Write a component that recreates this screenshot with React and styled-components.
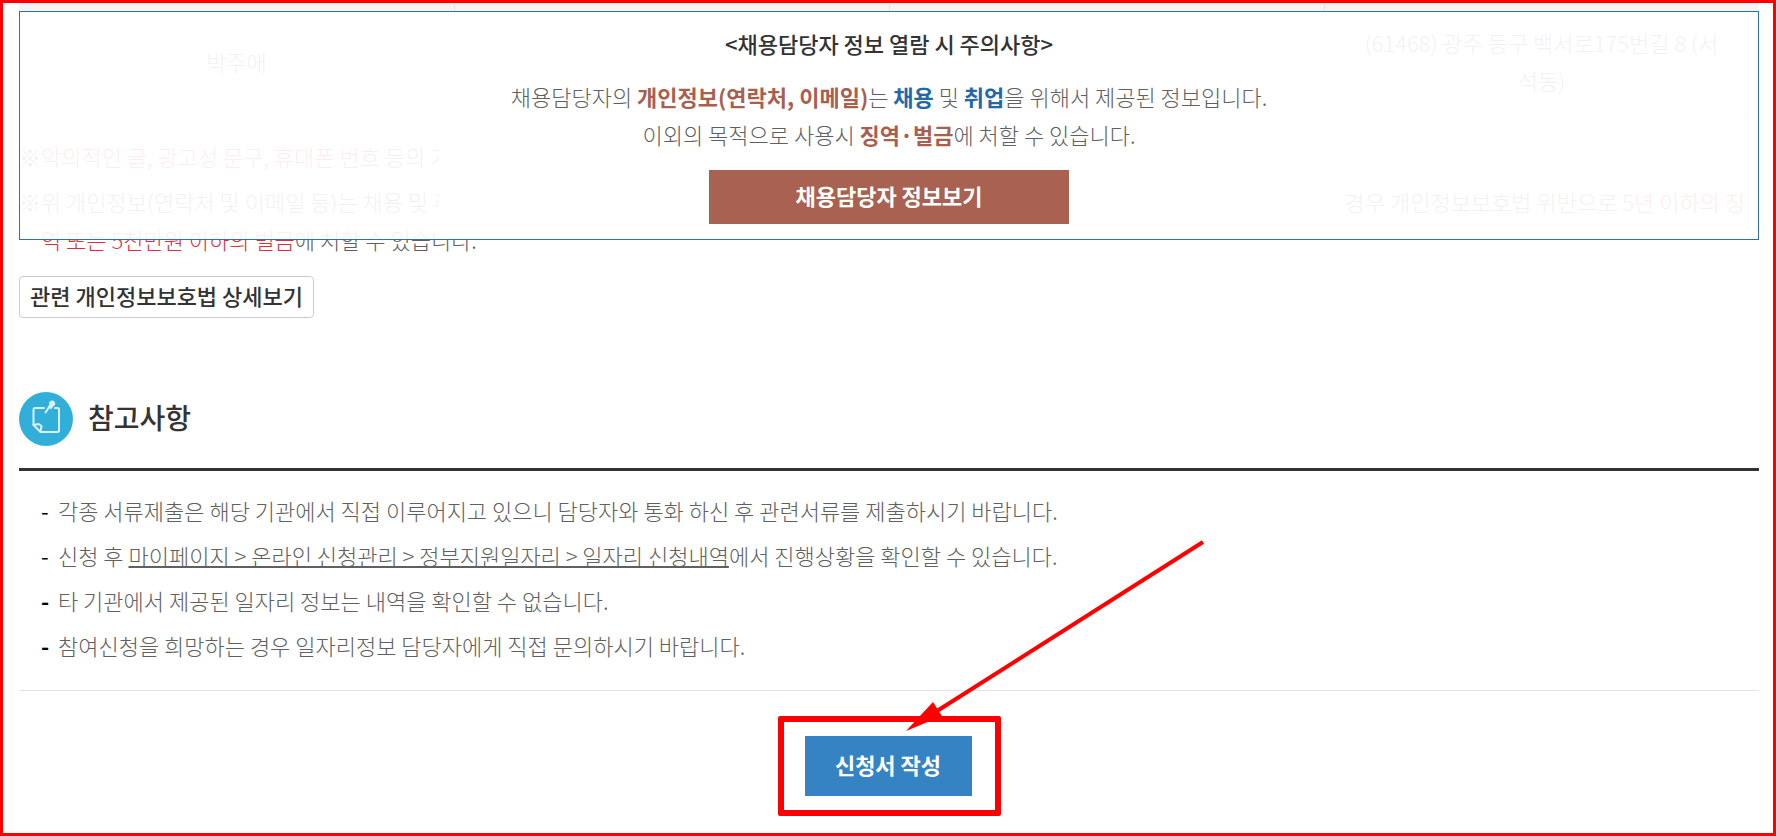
import React from 'react';
import styled, { createGlobalStyle } from 'styled-components';

const GlobalStyle = createGlobalStyle`
  * { box-sizing: border-box; }
  body {
    margin: 0;
    background: #fff;
    color: #606060;
    font-family: "Noto Sans CJK KR", sans-serif;
    font-size: 22px;
    font-weight: 300;
    line-height: 38px;
  }
  p, h2, h3, ul { margin: 0; padding: 0; }
  button { font-family: inherit; cursor: pointer; }
`;

const Page = styled.main`
  position: relative;
  min-height: 100vh;
  padding: 0 14px 17px 16px;
  border: 3px solid #f00;
`;

const ContactTable = styled.table`
  width: 100%;
  table-layout: fixed;
  border-collapse: separate;
  border-spacing: 0;
  text-align: center;

  th {
    height: 8px;
    padding: 0;
    background: #f4f4f4;
  }
  th + th { border-left: 1px solid #e5e5e5; }
  td {
    height: 107px;
    padding: 0 0 6px;
    border-bottom: 1px solid #e5e5e5;
  }
`;

const Cautions = styled.div`
  display: flex;
  flex-direction: column;
  gap: 7px;
  padding-top: 19px;
`;

const CautionLine = styled.div`
  display: flex;
  justify-content: space-between;
  padding-right: 14px;
  white-space: nowrap;
`;

const Mark = styled.span`
  display: inline-block;
  width: 22px;
`;

const CautionRest = styled.p`
  margin-top: -7px;
  padding-left: 22px;
`;

const Red = styled.span`
  color: #d9303e;
`;

const LawButton = styled.button`
  display: block;
  height: 42px;
  margin-top: 18px;
  padding: 0 10px 4px;
  border: 1px solid #ccc;
  border-radius: 4px;
  background: #fff;
  color: #333;
  font-size: 22px;
  font-weight: 500;
  line-height: 36px;
`;

const NoticePanel = styled.section`
  position: absolute;
  top: 8px;
  left: 16px;
  right: 14px;
  border: 1px solid #2d72ab;
  background: rgba(255, 255, 255, 0.91);
`;

const NoticeBody = styled.div`
  display: flex;
  flex-direction: column;
  align-items: center;
  gap: 15px;
  max-width: 900px;
  margin: 0 auto;
  padding: 12px 0 15px;
  background: #fff;
  text-align: center;
`;

const NoticeText = styled.p`
  padding-bottom: 2px;
`;

const NoticeTitle = styled.h3`
  color: #333;
  font-size: 22px;
  font-weight: 500;
`;

const Strong = styled.strong`
  color: ${(p) => (p.$tone === 'blue' ? '#2369a9' : '#a85f50')};
  font-weight: 700;
`;

const SolidButton = styled.button`
  display: block;
  width: ${(p) => (p.$wide ? '360px' : '167px')};
  height: ${(p) => (p.$wide ? '54px' : '60px')};
  padding: 0 0 4px;
  border: 0;
  background: ${(p) => (p.$wide ? '#a96151' : '#3683c3')};
  color: #fff;
  font-size: 22px;
  font-weight: 700;
`;

const SectionHeader = styled.header`
  display: flex;
  align-items: center;
  gap: 15px;
  margin-top: 74px;
  padding-bottom: 22px;
  border-bottom: 3px solid #333;
`;

const SectionTitle = styled.h2`
  padding-bottom: 4px;
  color: #333;
  font-size: 28px;
  font-weight: 500;
`;

const NoteList = styled.ul`
  display: flex;
  flex-direction: column;
  gap: 7px;
  padding: 20px 0 26px 22px;
  border-bottom: 1px solid #e5e5e5;
  list-style: none;
`;

const NoteItem = styled.li`
  display: flex;

  &::before {
    content: "-";
    flex: none;
    width: 17px;
    color: #000;
    font-weight: ${(p) => (p.$heavy ? 700 : 400)};
  }
`;

const PathLink = styled.a`
  color: inherit;
  text-decoration: underline;
  text-decoration-thickness: 2px;
`;

const Highlight = styled.div`
  position: relative;
  width: fit-content;
  margin: 25px auto 0;
  padding: 14px 23px 14px 21px;
  border: 6px solid #f00;
  border-radius: 2px;
`;

const Arrow = styled.svg`
  position: absolute;
  left: 122px;
  bottom: 78px;
  pointer-events: none;
`;

function NoteIcon() {
  return (
    <svg width="54" height="54" viewBox="0 0 54 54" aria-hidden="true">
      <circle cx="27" cy="27" r="27" fill="#31afd9" />
      <g fill="none" stroke="#d9f2fb" strokeWidth="2" strokeLinejoin="round" strokeLinecap="round">
        <path d="M25 16H16a1.500 1.500 0 0 0-1.500 1.500V33l7 7H38.500a1.500 1.500 0 0 0 1.500-1.500V17.500a1.500 1.500 0 0 0-1.500-1.500H36" />
        <path d="M14.500 33l5-1 3 2-1 6" />
        <path d="M26.500 20.500l4-6" />
      </g>
      <path d="M28.500 14.500l2-1.500a3 3 0 1 1 3.500 1.500l-2 3z" fill="#d9f2fb" />
    </svg>
  );
}

export default function App() {
  return (
    <>
      <GlobalStyle />
      <Page>
        <ContactTable>
          <thead>
            <tr>
              <th /><th /><th /><th />
            </tr>
          </thead>
          <tbody>
            <tr>
              <td>박주애</td>
              <td />
              <td />
              <td>(61468) 광주 동구 백서로175번길 8 (서<br />석동)</td>
            </tr>
          </tbody>
        </ContactTable>

        <Cautions>
          <CautionLine>
            <span><Mark>※</Mark><Red>악의적인 글, 광고성 문구, 휴대폰 번호</Red> 등의 기재</span>
          </CautionLine>
          <CautionLine>
            <span><Mark>※</Mark>위 개인정보(연락처 및 이메일 등)는 채용 및 취업</span>
            <span>할 경우 개인정보보호법 위반으로 <Red>5년 이하의 징</Red></span>
          </CautionLine>
          <CautionRest>
            <Red>역 또는 5천만원 이하의 벌금</Red>에 처할 수 있습니다.
          </CautionRest>
        </Cautions>

        <LawButton type="button">관련 개인정보보호법 상세보기</LawButton>

        <SectionHeader>
          <NoteIcon />
          <SectionTitle>참고사항</SectionTitle>
        </SectionHeader>

        <NoteList>
          <NoteItem>
            <p>각종 서류제출은 해당 기관에서 직접 이루어지고 있으니 담당자와 통화 하신 후 관련서류를 제출하시기 바랍니다.</p>
          </NoteItem>
          <NoteItem>
            <p>
              신청 후 <PathLink href="#mypage">마이페이지 &gt; 온라인 신청관리 &gt; 정부지원일자리 &gt; 일자리 신청내역</PathLink>에서
              {' '}진행상황을 확인할 수 있습니다.
            </p>
          </NoteItem>
          <NoteItem $heavy>
            <p>타 기관에서 제공된 일자리 정보는 내역을 확인할 수 없습니다.</p>
          </NoteItem>
          <NoteItem $heavy>
            <p>참여신청을 희망하는 경우 일자리정보 담당자에게 직접 문의하시기 바랍니다.</p>
          </NoteItem>
        </NoteList>

        <Highlight>
          <SolidButton type="button">신청서 작성</SolidButton>
          <Arrow width="299" height="192" viewBox="0 0 299 192" aria-hidden="true">
            <path d="M297 2L31 171" stroke="#f00" strokeWidth="4" />
            <path d="M0 191L27 162L36 176Z" fill="#f00" />
          </Arrow>
        </Highlight>

        <NoticePanel>
          <NoticeBody>
            <NoticeTitle>&lt;채용담당자 정보 열람 시 주의사항&gt;</NoticeTitle>
            <NoticeText>
              채용담당자의 <Strong>개인정보(연락처, 이메일)</Strong>는 <Strong $tone="blue">채용</Strong> 및{' '}
              <Strong $tone="blue">취업</Strong>을 위해서 제공된 정보입니다.
              <br />
              이외의 목적으로 사용시 <Strong>징역·벌금</Strong>에 처할 수 있습니다.
            </NoticeText>
            <SolidButton type="button" $wide>채용담당자 정보보기</SolidButton>
          </NoticeBody>
        </NoticePanel>
      </Page>
    </>
  );
}
